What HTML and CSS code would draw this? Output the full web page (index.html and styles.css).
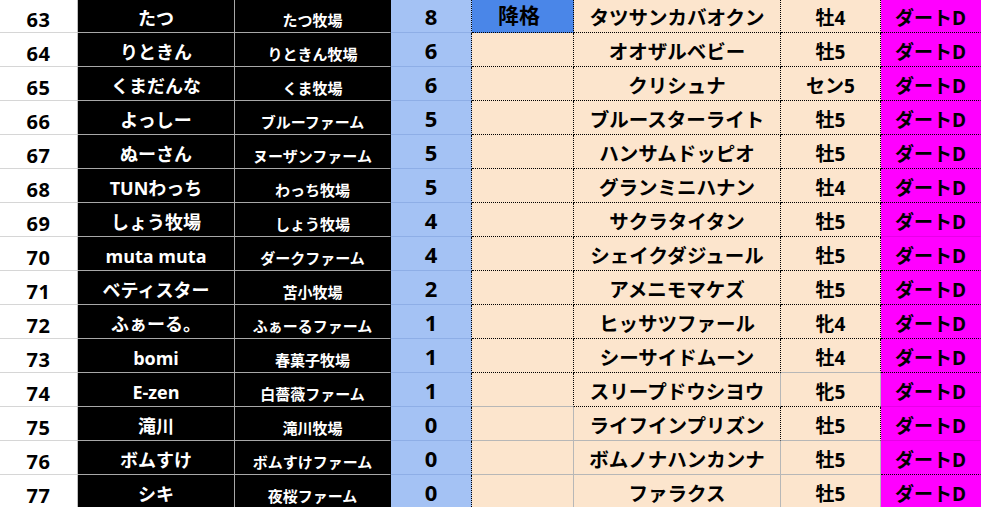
FILE: index.html
```html
<!DOCTYPE html>
<html lang="ja">
<head>
<meta charset="utf-8">
<link rel="stylesheet" href="styles.css">
</head>
<body>
<div class="sheet">
  <div class="c num">63</div><div class="c name">たつ</div><div class="c farm">たつ牧場</div><div class="c pt">8</div><div class="c tag demote dr db">降格</div><div class="c horse dr db">タツサンカバオクン</div><div class="c sex dr db">牡4</div><div class="c race db">ダートD</div>
  <div class="c num">64</div><div class="c name">りときん</div><div class="c farm">りときん牧場</div><div class="c pt">6</div><div class="c tag dr db"></div><div class="c horse dr db">オオザルベビー</div><div class="c sex dr db">牡5</div><div class="c race db">ダートD</div>
  <div class="c num">65</div><div class="c name">くまだんな</div><div class="c farm">くま牧場</div><div class="c pt">6</div><div class="c tag dr db"></div><div class="c horse dr db">クリシュナ</div><div class="c sex dr db">セン5</div><div class="c race db">ダートD</div>
  <div class="c num">66</div><div class="c name">よっしー</div><div class="c farm">ブルーファーム</div><div class="c pt">5</div><div class="c tag dr db"></div><div class="c horse dr db">ブルースターライト</div><div class="c sex dr db">牡5</div><div class="c race db">ダートD</div>
  <div class="c num">67</div><div class="c name">ぬーさん</div><div class="c farm">ヌーザンファーム</div><div class="c pt">5</div><div class="c tag dr db"></div><div class="c horse dr db">ハンサムドッピオ</div><div class="c sex dr db">牡5</div><div class="c race db">ダートD</div>
  <div class="c num">68</div><div class="c name">TUNわっち</div><div class="c farm">わっち牧場</div><div class="c pt">5</div><div class="c tag dr db"></div><div class="c horse dr db">グランミニハナン</div><div class="c sex dr db">牡4</div><div class="c race db">ダートD</div>
  <div class="c num">69</div><div class="c name">しょう牧場</div><div class="c farm">しょう牧場</div><div class="c pt">4</div><div class="c tag dr db"></div><div class="c horse dr db">サクラタイタン</div><div class="c sex dr db">牡5</div><div class="c race">ダートD</div>
  <div class="c num">70</div><div class="c name">muta muta</div><div class="c farm">ダークファーム</div><div class="c pt">4</div><div class="c tag dr db"></div><div class="c horse dr db">シェイクダジュール</div><div class="c sex dr db">牡5</div><div class="c race db">ダートD</div>
  <div class="c num">71</div><div class="c name">ベティスター</div><div class="c farm">苫小牧場</div><div class="c pt">2</div><div class="c tag dr db"></div><div class="c horse dr db">アメニモマケズ</div><div class="c sex dr db">牡5</div><div class="c race db">ダートD</div>
  <div class="c num">72</div><div class="c name">ふぁーる。</div><div class="c farm">ふぁーるファーム</div><div class="c pt">1</div><div class="c tag dr db"></div><div class="c horse dr db">ヒッサツファール</div><div class="c sex dr db">牝4</div><div class="c race db">ダートD</div>
  <div class="c num">73</div><div class="c name">bomi</div><div class="c farm">春菓子牧場</div><div class="c pt">1</div><div class="c tag dr db"></div><div class="c horse dr db">シーサイドムーン</div><div class="c sex dr">牡4</div><div class="c race db">ダートD</div>
  <div class="c num">74</div><div class="c name">E-zen</div><div class="c farm">白薔薇ファーム</div><div class="c pt">1</div><div class="c tag dr"></div><div class="c horse db">スリープドウシヨウ</div><div class="c sex db">牝5</div><div class="c race">ダートD</div>
  <div class="c num">75</div><div class="c name">滝川</div><div class="c farm">滝川牧場</div><div class="c pt">0</div><div class="c tag"></div><div class="c horse dr">ライフインプリズン</div><div class="c sex dr">牡5</div><div class="c race">ダートD</div>
  <div class="c num">76</div><div class="c name">ボムすけ</div><div class="c farm">ボムすけファーム</div><div class="c pt">0</div><div class="c tag"></div><div class="c horse">ボムノナハンカンナ</div><div class="c sex">牡5</div><div class="c race db">ダートD</div>
  <div class="c num">77</div><div class="c name">シキ</div><div class="c farm">夜桜ファーム</div><div class="c pt">0</div><div class="c tag"></div><div class="c horse">ファラクス</div><div class="c sex">牡5</div><div class="c race">ダートD</div>
</div>
</body>
</html>
```

FILE: styles.css
```css
html, body {
  margin: 0;
  padding: 0;
  background: #ffffff;
  overflow: hidden;
}

body {
  font-family: "Open Sans", "Noto Sans CJK JP", sans-serif;
  font-weight: 700;
  color: #000;
}

.sheet {
  display: grid;
  grid-template-columns: 78px 157px 156px 81px 102px 207px 100px 100px;
  grid-auto-rows: 34px;
  margin-top: -1px;
}

.c {
  box-sizing: border-box;
  border-right: 1px solid #b7b7b7;
  border-bottom: 1px solid #b7b7b7;
  display: flex;
  align-items: center;
  justify-content: center;
  white-space: nowrap;
  line-height: 1;
}

.num {
  background: #fff;
  border-right-color: #c0c0c0;
  border-bottom-color: #d6d6d6;
  font-size: 20px;
  padding-top: 8px;
  letter-spacing: 0.5px;
}

.name {
  background: #000;
  color: #fff;
  border-color: #a8a8a8;
  font-size: 18px;
  padding-top: 4px;
}

.farm {
  background: #000;
  color: #fff;
  border-right-color: #000;
  border-bottom-color: #a8a8a8;
  font-size: 15px;
  padding-top: 10px;
}

.pt {
  background: #a4c2f4;
  border-right: 1px dotted #000;
  border-bottom-color: #8eaee6;
  font-size: 22px;
  padding-top: 1px;
}

.tag {
  background: #fce5cd;
  font-size: 21px;
  padding-bottom: 1px;
}

.tag.demote {
  background: #4a86e8;
  justify-content: flex-start;
  padding-left: 26px;
}

.horse {
  background: #fce5cd;
  font-size: 19.5px;
  padding-top: 5px;
}

.sex {
  background: #fce5cd;
  font-size: 19px;
  padding-top: 6px;
}

.race {
  background: #ff00ff;
  border-right-color: #ff00ff;
  border-bottom-color: #e600e6;
  font-size: 19px;
  padding-top: 6px;
}

.dr {
  border-right: 1px dotted #000;
}

.db {
  border-bottom: 1px dotted #000;
}
```
